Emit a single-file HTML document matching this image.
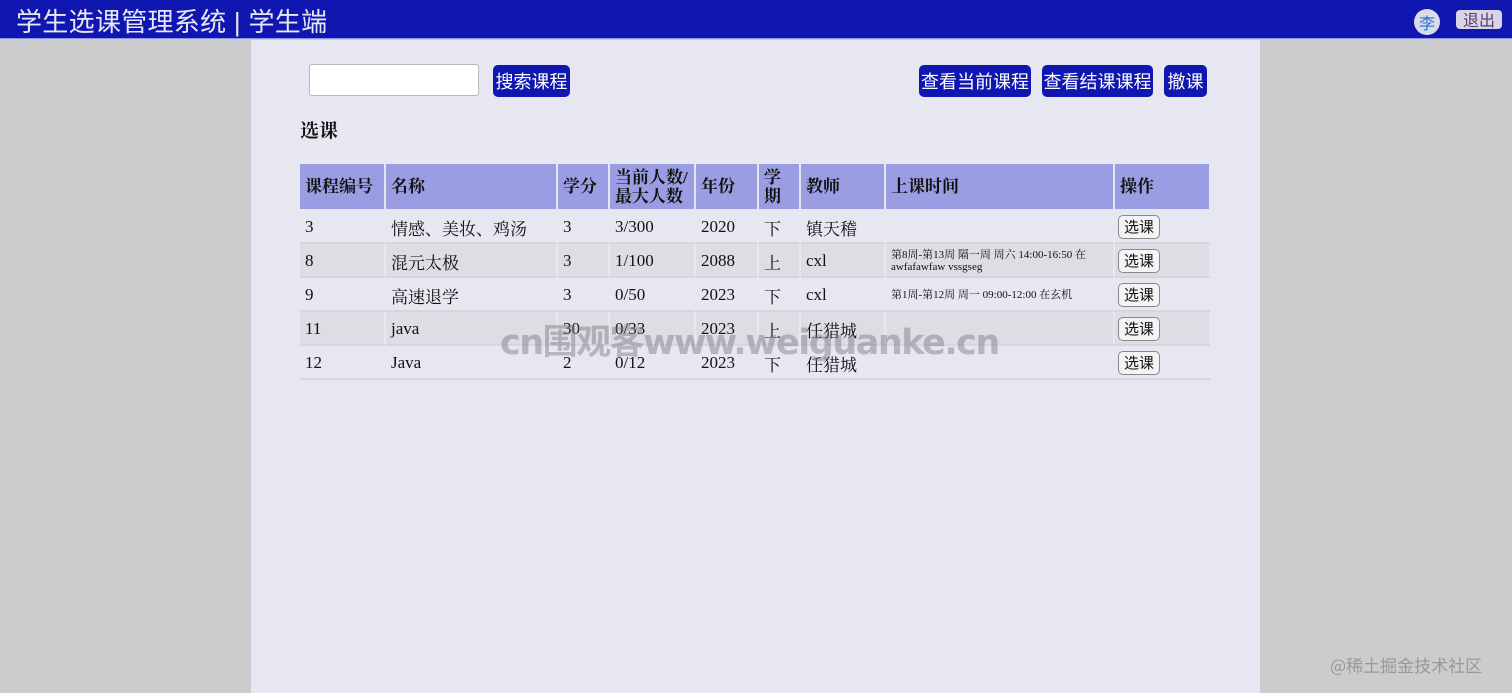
<!DOCTYPE html>
<html><head><meta charset="utf-8"><style>
*{margin:0;padding:0;box-sizing:border-box}
body{width:1512px;height:693px;overflow:hidden;background:#cccccc;font-family:"Liberation Serif","Noto Serif CJK SC",serif;position:relative}
.hdr{position:absolute;left:0;top:0;width:1512px;height:39px;background:#1016b0;border-bottom:1px solid #8f93e8}
.title{position:absolute;left:16px;top:2px;color:#e8e8f4;font:26px "Liberation Sans","Noto Sans CJK SC",sans-serif;letter-spacing:0.3px}
.av{position:absolute;left:1414px;top:9px;width:26px;height:26px;border-radius:50%;background:#d8dbe8;color:#2a6fd0;font:16px "Noto Sans CJK SC",sans-serif;text-align:center;line-height:26px}
.out{position:absolute;left:1456px;top:10px;width:46px;height:19px;border-radius:4px;background:#d8d6e6;color:#5a3a6a;font:16px "Noto Sans CJK SC",sans-serif;text-align:center;line-height:19px}
.panel{position:absolute;left:251px;top:40px;width:1009px;height:653px;background:#e6e7f1}
.inp{position:absolute;left:309px;top:64px;width:170px;height:32px;background:#fff;border:1px solid #b8b8c0;border-radius:3px}
.btn{position:absolute;top:65px;height:32px;background:#1016b0;color:#fff;border-radius:5px;font:18px "Noto Sans CJK SC",sans-serif;line-height:32px;text-align:center}
h3{position:absolute;left:300px;top:116px;font-size:19px;font-weight:bold;color:#111}
table{position:absolute;left:300px;top:164px;border-collapse:separate;border-spacing:0;table-layout:fixed;width:911px}
td,th{font-size:17px;color:#111;text-align:left;padding-left:5px;border-right:2px solid #e6e7f1;border-bottom:2px solid #d6d6dc}
th{background:#9b9de3;height:46px;font-weight:bold;line-height:19px;border-bottom:1px solid #e6e7f1}
td{height:34px;padding-top:2px}
tr.alt td{background:#dddde3}
.sm{font-size:11px;line-height:12px}
.cb{display:inline-block;width:42px;height:24px;border:1px solid #888;border-radius:5px;background:#f4f4f6;font:15px "Noto Sans CJK SC",sans-serif;text-align:center;line-height:22px;margin-left:-2px}
.wm{position:absolute;left:500px;top:314px;font:bold 35px "DejaVu Sans","Noto Sans CJK SC",sans-serif;color:rgba(120,120,130,0.45);letter-spacing:-1.5px}
.jj{position:absolute;left:1330px;top:652px;font:17px "Noto Sans CJK SC",sans-serif;color:#999}
</style></head><body>
<div class="hdr"><div class="title">学生选课管理系统 | 学生端</div><div class="av">李</div><div class="out">退出</div></div>
<div class="panel"></div>
<div class="inp"></div>
<div class="btn" style="left:493px;width:77px">搜索课程</div>
<div class="btn" style="left:919px;width:112px">查看当前课程</div>
<div class="btn" style="left:1042px;width:111px">查看结课课程</div>
<div class="btn" style="left:1164px;width:43px">撤课</div>
<h3>选课</h3>
<table>
<colgroup><col style="width:86px"><col style="width:172px"><col style="width:52px"><col style="width:86px"><col style="width:63px"><col style="width:42px"><col style="width:85px"><col style="width:229px"><col style="width:96px"></colgroup>
<tr><th>课程编号</th><th>名称</th><th>学分</th><th>当前人数/<br>最大人数</th><th>年份</th><th>学<br>期</th><th>教师</th><th>上课时间</th><th>操作</th></tr>
<tr><td>3</td><td>情感、美妆、鸡汤</td><td>3</td><td>3/300</td><td>2020</td><td>下</td><td>镇天稽</td><td></td><td><span class="cb">选课</span></td></tr>
<tr class="alt"><td>8</td><td>混元太极</td><td>3</td><td>1/100</td><td>2088</td><td>上</td><td>cxl</td><td class="sm">第8周-第13周 隔一周 周六 14:00-16:50 在<br>awfafawfaw vssgseg</td><td><span class="cb">选课</span></td></tr>
<tr><td>9</td><td>高速退学</td><td>3</td><td>0/50</td><td>2023</td><td>下</td><td>cxl</td><td class="sm">第1周-第12周 周一 09:00-12:00 在玄机</td><td><span class="cb">选课</span></td></tr>
<tr class="alt"><td>11</td><td>java</td><td>30</td><td>0/33</td><td>2023</td><td>上</td><td>任猎城</td><td></td><td><span class="cb">选课</span></td></tr>
<tr><td>12</td><td>Java</td><td>2</td><td>0/12</td><td>2023</td><td>下</td><td>任猎城</td><td></td><td><span class="cb">选课</span></td></tr>
</table>
<div class="wm">cn围观客www.weiguanke.cn</div>
<div class="jj">@稀土掘金技术社区</div>
</body></html>
